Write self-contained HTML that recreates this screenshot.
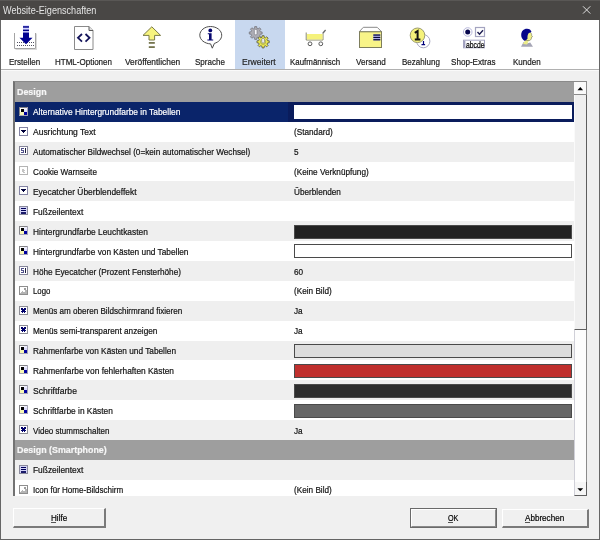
<!DOCTYPE html>
<html><head><meta charset="utf-8"><style>
*{margin:0;padding:0;box-sizing:border-box}
html,body{width:600px;height:540px;overflow:hidden;background:#f0f0f0;font-family:"Liberation Sans",sans-serif;font-size:9px;color:#000}
.a{position:absolute}
.t{position:absolute;white-space:nowrap;transform-origin:0 0;line-height:10px;filter:grayscale(1);-webkit-text-stroke:0.2px currentColor}
.lbl{position:absolute;white-space:nowrap;line-height:10px;color:#1a1a1a}
</style></head><body>

<div class="a" style="left:0;top:0;width:600px;height:20px;background:#494745"></div>
<div class="a" style="left:0;top:0;width:600px;height:1px;background:#595755"></div>
<div class="t" style="left:2.6px;top:6.2px;font-size:10px;color:#e4e4e4;-webkit-text-stroke:0;transform:scaleX(0.91)">Website-Eigenschaften</div>
<svg class="a" style="left:580px;top:4px" width="14" height="12"><path d="M3 2.3l7.3 7.3M10.3 2.3l-7.3 7.3" stroke="#e0e0e0" stroke-width="1"/></svg>
<div class="a" style="left:1px;top:20px;width:598px;height:49px;background:#fff"></div>
<div class="a" style="left:235px;top:20px;width:50px;height:49px;background:#c8d8ef"></div>
<div class="a" style="left:1px;top:69px;width:598px;height:1px;background:#b0b0b0"></div>
<div class="a" style="left:1px;top:70px;width:598px;height:1px;background:#fafafa"></div>
<div class="a" style="left:0;top:20px;width:1px;height:520px;background:#666666"></div>
<div class="a" style="left:599px;top:20px;width:1px;height:520px;background:#666666"></div>
<div class="a" style="left:0;top:539px;width:600px;height:1px;background:#646464"></div>
<div class="t" style="left:8.92px;top:57px;color:#1a1a1a;transform:scaleX(0.89)">Erstellen</div>
<div class="t" style="left:55.12px;top:57px;color:#1a1a1a;transform:scaleX(0.89)">HTML-Optionen</div>
<div class="t" style="left:124.58px;top:57px;color:#1a1a1a;transform:scaleX(0.93)">Veröffentlichen</div>
<div class="t" style="left:195.39px;top:57px;color:#1a1a1a;transform:scaleX(0.89)">Sprache</div>
<div class="t" style="left:242.14px;top:57px;color:#18223c;transform:scaleX(0.95)">Erweitert</div>
<div class="t" style="left:289.92px;top:57px;color:#1a1a1a;transform:scaleX(0.88)">Kaufmännisch</div>
<div class="t" style="left:355.75px;top:57px;color:#1a1a1a;transform:scaleX(0.9)">Versand</div>
<div class="t" style="left:401.84px;top:57px;color:#1a1a1a;transform:scaleX(0.89)">Bezahlung</div>
<div class="t" style="left:451.33px;top:57px;color:#1a1a1a;transform:scaleX(0.9)">Shop-Extras</div>
<div class="t" style="left:513.11px;top:57px;color:#1a1a1a;transform:scaleX(0.89)">Kunden</div>
<svg class="a" style="left:0;top:0" width="600" height="69">
<!-- Erstellen -->
<path d="M14.5 33v15.5h21V33" fill="#fff" stroke="#a4a4a4"/>
<path d="M15.5 49.5h21.5M36.5 33.5v16" stroke="#dadada"/>
<path d="M17 42.5h17M17 45.5h17" stroke="#505060" stroke-dasharray="1 1"/>
<rect x="23" y="25.3" width="6" height="7.3" fill="#d4d4ff"/>
<rect x="23" y="26.2" width="6" height="1.5" fill="#000088"/>
<rect x="23" y="29.6" width="6" height="1.5" fill="#000088"/>
<path d="M23 32.6h6v5.2h3.5L26 44.2 19.5 37.8H23z" fill="#000090"/>
<!-- HTML -->
<path d="M74.5 26.5h14.5l4 4v19h-18.5z" fill="#fff" stroke="#8a8a8a"/>
<path d="M89 26.5v4h4" fill="#e0e0e0" stroke="#5a5a5a"/>
<path d="M82 34l-4 3.8 4 3.8M85.5 34l4 3.8-4 3.8" fill="none" stroke="#14145a" stroke-width="1.8"/>
<!-- Veroeffentlichen -->
<path d="M151.8 26.8l8.8 8.6h-6v4.6h-5.6v-4.6h-6z" fill="#f7f47e" stroke="#7a7a48" stroke-linejoin="round"/>
<rect x="148.8" y="42" width="6" height="1.8" fill="#75754f"/>
<rect x="148.8" y="46.2" width="6" height="1.8" fill="#75754f"/>
<!-- Sprache -->
<path d="M210.4 26.5c6.3 0 11.3 3.9 11.3 8.7 0 3.8-3 6.9-7.3 8.2l-2.1 4.8-1.7-4.3c-6-0.3-10.8-4.1-10.8-8.7 0-4.8 4.9-8.7 10.6-8.7z" fill="#fff" stroke="#4c4c4c"/>
<circle cx="210.3" cy="30.4" r="1.9" fill="#06066e"/>
<path d="M207.8 33.2h3.8v6.4h1.6v1h-5.8v-1h1.6v-5.4h-1.2z" fill="#06066e"/>
<!-- Erweitert gears -->
<path d="M254.68 26.58L256.72 26.58L256.89 28.35L258.14 28.87L259.52 27.74L260.96 29.18L259.83 30.56L260.35 31.81L262.12 31.98L262.12 34.02L260.35 34.19L259.83 35.44L260.96 36.82L259.52 38.26L258.14 37.13L256.89 37.65L256.72 39.42L254.68 39.42L254.51 37.65L253.26 37.13L251.88 38.26L250.44 36.82L251.57 35.44L251.05 34.19L249.28 34.02L249.28 31.98L251.05 31.81L251.57 30.56L250.44 29.18L251.88 27.74L253.26 28.87L254.51 28.35z" fill="#acacb4" stroke="#6e6e76" stroke-width="0.7"/>
<rect x="254.4" y="29.4" width="2.6" height="5.4" rx="1" fill="#f4f4f8" stroke="#76767e" stroke-width="0.6"/>
<path d="M262.13 35.68L264.07 35.68L264.24 37.34L265.44 37.84L266.74 36.78L268.12 38.16L267.06 39.46L267.56 40.66L269.22 40.83L269.22 42.77L267.56 42.94L267.06 44.14L268.12 45.44L266.74 46.82L265.44 45.76L264.24 46.26L264.07 47.92L262.13 47.92L261.96 46.26L260.76 45.76L259.46 46.82L258.08 45.44L259.14 44.14L258.64 42.94L256.98 42.77L256.98 40.83L258.64 40.66L259.14 39.46L258.08 38.16L259.46 36.78L260.76 37.84L261.96 37.34z" fill="#ecea50" stroke="#56563a" stroke-width="0.8"/>
<circle cx="263.1" cy="41.8" r="2.6" fill="none" stroke="#8a8a50" stroke-width="0.6"/>
<rect x="261.8" y="38.4" width="2.6" height="4.6" rx="1" fill="#f4f4f4" stroke="#70707a" stroke-width="0.6"/>
<!-- Kaufmaennisch cart -->
<path d="M306.2 32.5v7.5h16.8v-7.5" fill="none" stroke="#8a8a70" stroke-width="1"/>
<rect x="307" y="34" width="15.5" height="5.5" fill="#f5f27c"/>
<path d="M323 33l2.6-3" stroke="#6a6a6a" stroke-width="1.3"/>
<circle cx="310" cy="43.8" r="1.9" fill="#fff" stroke="#5a5a5a" stroke-width="1"/>
<circle cx="320.8" cy="43.8" r="1.9" fill="#fff" stroke="#5a5a5a" stroke-width="1"/>
<!-- Versand -->
<path d="M363.3 27.3h13.9l4.5 4.5h-22.5z" fill="#fff" stroke="#8a8a8a"/>
<rect x="359.5" y="31.8" width="22" height="15.7" fill="#f8f488" stroke="#7e7e5c"/>
<rect x="373.3" y="34.4" width="7" height="6" fill="#c0c0ff"/>
<rect x="373.3" y="34.4" width="7" height="1.3" fill="#08083a"/>
<rect x="373.3" y="36.8" width="7" height="1.3" fill="#08083a"/>
<rect x="373.3" y="39.1" width="7" height="1.3" fill="#08083a"/>
<!-- Bezahlung -->
<circle cx="423.3" cy="41.2" r="6.6" fill="#fff" stroke="#a8a8c0"/>
<path d="M421.5 44.6h3.6M423.5 44.6v-3.5" stroke="#00007a" stroke-width="1.2"/>
<circle cx="417.5" cy="35.3" r="7.3" fill="#f5f27a" stroke="#9a9a70"/>
<path d="M414.8 39.4h5.6M417.6 39.4v-8.4l-2.8 1.8" fill="none" stroke="#141414" stroke-width="2"/>
<!-- Shop-Extras -->
<circle cx="467.7" cy="32" r="4.3" fill="#fff" stroke="#b8b8dc"/>
<circle cx="467.7" cy="32" r="2.5" fill="#08084e"/>
<rect x="475.5" y="27.5" width="9" height="9" fill="#fff" stroke="#a4a4c0" stroke-width="1.2"/>
<path d="M477.5 32l2 2.2 3.5-4" fill="none" stroke="#1c1c50" stroke-width="1.4"/>
<rect x="463.5" y="40.2" width="21" height="7.6" fill="#fff" stroke="#a4a4c0" stroke-width="1"/>
<rect x="464.2" y="40.8" width="1.1" height="6.4" fill="#8a8ab0"/>
<!-- Kunden -->
<path d="M521 46.8L523.6 42L527 43.6L530.2 42.4L533 46.8z" fill="#a6a6b6"/>
<path d="M523 44L525.6 39.6L529 40.4L527 44.4z" fill="#ecec88"/>
<path d="M527 32.2L530.4 32.4C531.4 33.2 531.8 34.4 531.6 35.4L532.5 36.7L531.5 37.3C531.6 38.7 531 39.8 529.8 40.5L526.4 40.5C525.6 38 525.9 35 527 32.2z" fill="#f0f08c" stroke="#6e6e52" stroke-width="0.6"/>
<path d="M521.2 35.2C521.2 31.2 523.6 28.8 527 28.8C529.4 28.8 531 30 531.5 32.1L528.8 32.9C527.6 34.6 527.2 36.6 527.6 38.6L525 40.9C522.6 39.9 521.2 37.6 521.2 35.2z" fill="#06068a"/>
</svg>
<div class="t" style="left:465.6px;top:40px;font-size:8.5px;color:#000;transform:scaleX(0.8)">abcde</div>
<div class="a" style="left:13px;top:81px;width:574px;height:415px;background:#fff;overflow:hidden;border-left:2px solid #727272;border-top:1px solid #8a8a8a">
<div class="a" style="left:0;top:0.00px;width:571px;height:19.89px;background:#9e9e9e"></div>
<div class="t" style="left:2.3999999999999986px;top:4.60px;font-weight:bold;font-size:9.6px;color:#f6f6f6;transform:scaleX(0.925)">Design</div>
<div class="a" style="left:0;top:19.89px;width:559px;height:19.89px;background:#0a246a"></div>
<svg class="a" style="left:4px;top:25.00px" width="9" height="9" shape-rendering="crispEdges"><rect width="9" height="9" fill="#fff"/><rect x="5" y="1" width="3" height="7" fill="#dcdcff"/><rect x="5" y="1" width="3" height="2" fill="#eeeeff"/><rect width="9" height="1" fill="#848488"/><rect width="1" height="9" fill="#848488"/><rect x="8" width="1" height="9" fill="#a4a4b4"/><rect y="8" width="9" height="1" fill="#a4a4b4"/><rect x="2" y="2" width="3" height="2.5" fill="#000"/><rect x="1" y="4.6" width="3.6" height="3.4" fill="#f6f6b4"/><rect x="5" y="5" width="2.6" height="2.6" fill="#0000a0"/></svg>
<div class="t" style="left:17.6px;top:25.39px;color:#ffffff;transform:scaleX(0.933)">Alternative Hintergrundfarbe in Tabellen</div>
<div class="a" style="left:273px;top:19.89px;width:286px;height:19.89px;background:#0a1c5c"></div>
<div class="a" style="left:279px;top:22.89px;width:278px;height:14px;background:#fff"></div>
<div class="a" style="left:0;top:39.78px;width:559px;height:19.89px;background:#ffffff"></div>
<svg class="a" style="left:4px;top:45.00px" width="9" height="9" shape-rendering="crispEdges"><rect width="9" height="9" fill="#fff"/><rect width="9" height="9" fill="none" stroke="#8484a4" stroke-width="2"/><path d="M2 3.3h5l-2.5 3z" fill="#00003a"/></svg>
<div class="t" style="left:17.6px;top:45.28px;color:#111;transform:scaleX(0.943)">Ausrichtung Text</div>
<div class="t" style="left:278.6px;top:45.28px;color:#111;transform:scaleX(0.91)">(Standard)</div>
<div class="a" style="left:0;top:59.67px;width:559px;height:19.89px;background:#efefef"></div>
<svg class="a" style="left:4px;top:64.00px" width="9" height="9" shape-rendering="crispEdges"><rect width="9" height="9" fill="#fff"/><rect width="9" height="9" fill="none" stroke="#86869a" stroke-width="2"/><path d="M2 2h3.2v1.3h-2v0.9h2v2.8h-3.2v-1.1h2v-0.8h-2z" fill="#50508a"/><rect x="6" y="2" width="1.2" height="5" fill="#1c1c3c"/></svg>
<div class="t" style="left:17.6px;top:65.17px;color:#111;transform:scaleX(0.910)">Automatischer Bildwechsel (0=kein automatischer Wechsel)</div>
<div class="t" style="left:278.6px;top:65.17px;color:#111;transform:scaleX(0.91)">5</div>
<div class="a" style="left:0;top:79.56px;width:559px;height:19.89px;background:#ffffff"></div>
<svg class="a" style="left:4px;top:84.00px" width="9" height="9" shape-rendering="crispEdges"><rect width="9" height="9" fill="#fff"/><rect width="9" height="9" fill="none" stroke="#b4b4b4" stroke-width="2"/><path d="M2.8 2v4.8l1.2-1 1 1.8 0.9-0.5-1-1.8h1.8z" fill="#c4c4c4"/></svg>
<div class="t" style="left:17.6px;top:85.06px;color:#111;transform:scaleX(0.904)">Cookie Warnseite</div>
<div class="t" style="left:278.6px;top:85.06px;color:#111;transform:scaleX(0.91)">(Keine Verknüpfung)</div>
<div class="a" style="left:0;top:99.45px;width:559px;height:19.89px;background:#efefef"></div>
<svg class="a" style="left:4px;top:104.00px" width="9" height="9" shape-rendering="crispEdges"><rect width="9" height="9" fill="#fff"/><rect width="9" height="9" fill="none" stroke="#8484a4" stroke-width="2"/><path d="M2 3.3h5l-2.5 3z" fill="#00003a"/></svg>
<div class="t" style="left:17.6px;top:104.95px;color:#111;transform:scaleX(0.933)">Eyecatcher Überblendeffekt</div>
<div class="t" style="left:278.6px;top:104.95px;color:#111;transform:scaleX(0.91)">Überblenden</div>
<div class="a" style="left:0;top:119.34px;width:559px;height:19.89px;background:#ffffff"></div>
<svg class="a" style="left:4px;top:124.00px" width="9" height="9" shape-rendering="crispEdges"><rect width="9" height="9" fill="#d4d4f6"/><rect width="9" height="9" fill="none" stroke="#8a8a9c" stroke-width="2"/><rect x="2" y="2" width="5" height="1.2" fill="#000058"/><rect x="2" y="4.2" width="5" height="1.2" fill="#000058"/><rect x="2" y="6.3" width="5" height="1.2" fill="#1a1a6a"/></svg>
<div class="t" style="left:17.6px;top:124.84px;color:#111;transform:scaleX(0.930)">Fußzeilentext</div>
<div class="a" style="left:0;top:139.23px;width:559px;height:19.89px;background:#efefef"></div>
<svg class="a" style="left:4px;top:144.00px" width="9" height="9" shape-rendering="crispEdges"><rect width="9" height="9" fill="#fff"/><rect x="5" y="1" width="3" height="7" fill="#dcdcff"/><rect x="5" y="1" width="3" height="2" fill="#eeeeff"/><rect width="9" height="1" fill="#848488"/><rect width="1" height="9" fill="#848488"/><rect x="8" width="1" height="9" fill="#a4a4b4"/><rect y="8" width="9" height="1" fill="#a4a4b4"/><rect x="2" y="2" width="3" height="2.5" fill="#000"/><rect x="1" y="4.6" width="3.6" height="3.4" fill="#f6f6b4"/><rect x="5" y="5" width="2.6" height="2.6" fill="#0000a0"/></svg>
<div class="t" style="left:17.6px;top:144.73px;color:#111;transform:scaleX(0.929)">Hintergrundfarbe Leuchtkasten</div>
<div class="a" style="left:279px;top:142.53px;width:278px;height:14px;background:#222222;border:1px solid #4a4a4a"></div>
<div class="a" style="left:0;top:159.12px;width:559px;height:19.89px;background:#ffffff"></div>
<svg class="a" style="left:4px;top:164.00px" width="9" height="9" shape-rendering="crispEdges"><rect width="9" height="9" fill="#fff"/><rect x="5" y="1" width="3" height="7" fill="#dcdcff"/><rect x="5" y="1" width="3" height="2" fill="#eeeeff"/><rect width="9" height="1" fill="#848488"/><rect width="1" height="9" fill="#848488"/><rect x="8" width="1" height="9" fill="#a4a4b4"/><rect y="8" width="9" height="1" fill="#a4a4b4"/><rect x="2" y="2" width="3" height="2.5" fill="#000"/><rect x="1" y="4.6" width="3.6" height="3.4" fill="#f6f6b4"/><rect x="5" y="5" width="2.6" height="2.6" fill="#0000a0"/></svg>
<div class="t" style="left:17.6px;top:164.62px;color:#111;transform:scaleX(0.923)">Hintergrundfarbe von Kästen und Tabellen</div>
<div class="a" style="left:279px;top:162.42px;width:278px;height:14px;background:#ffffff;border:1px solid #4a4a4a"></div>
<div class="a" style="left:0;top:179.01px;width:559px;height:19.89px;background:#efefef"></div>
<svg class="a" style="left:4px;top:184.00px" width="9" height="9" shape-rendering="crispEdges"><rect width="9" height="9" fill="#fff"/><rect width="9" height="9" fill="none" stroke="#86869a" stroke-width="2"/><path d="M2 2h3.2v1.3h-2v0.9h2v2.8h-3.2v-1.1h2v-0.8h-2z" fill="#50508a"/><rect x="6" y="2" width="1.2" height="5" fill="#1c1c3c"/></svg>
<div class="t" style="left:17.6px;top:184.51px;color:#111;transform:scaleX(0.916)">Höhe Eyecatcher (Prozent Fensterhöhe)</div>
<div class="t" style="left:278.6px;top:184.51px;color:#111;transform:scaleX(0.91)">60</div>
<div class="a" style="left:0;top:198.90px;width:559px;height:19.89px;background:#ffffff"></div>
<svg class="a" style="left:4px;top:204.00px" width="9" height="9" shape-rendering="crispEdges"><rect width="9" height="9" fill="#fff"/><rect width="9" height="9" fill="none" stroke="#8e8e8e" stroke-width="2"/><path d="M1 8l2.6-3.2 1.4 1.4 2.2-2.6 0.8 1v3.4z" fill="#b4b4b4"/><circle cx="6" cy="2.8" r="1.1" fill="#9c9c9c"/></svg>
<div class="t" style="left:17.6px;top:204.40px;color:#111;transform:scaleX(0.865)">Logo</div>
<div class="t" style="left:278.6px;top:204.40px;color:#111;transform:scaleX(0.91)">(Kein Bild)</div>
<div class="a" style="left:0;top:218.79px;width:559px;height:19.89px;background:#efefef"></div>
<svg class="a" style="left:4px;top:224.00px" width="9" height="9" shape-rendering="crispEdges"><rect width="9" height="9" fill="#fff"/><rect width="9" height="9" fill="none" stroke="#8c8c94" stroke-width="2"/><path d="M2.5 2.5l4 4M6.5 2.5l-4 4" stroke="#00006a" stroke-width="1.5"/></svg>
<div class="t" style="left:17.6px;top:224.29px;color:#111;transform:scaleX(0.899)">Menüs am oberen Bildschirmrand fixieren</div>
<div class="t" style="left:278.6px;top:224.29px;color:#111;transform:scaleX(0.91)">Ja</div>
<div class="a" style="left:0;top:238.68px;width:559px;height:19.89px;background:#ffffff"></div>
<svg class="a" style="left:4px;top:243.00px" width="9" height="9" shape-rendering="crispEdges"><rect width="9" height="9" fill="#fff"/><rect width="9" height="9" fill="none" stroke="#8c8c94" stroke-width="2"/><path d="M2.5 2.5l4 4M6.5 2.5l-4 4" stroke="#00006a" stroke-width="1.5"/></svg>
<div class="t" style="left:17.6px;top:244.18px;color:#111;transform:scaleX(0.914)">Menüs semi-transparent anzeigen</div>
<div class="t" style="left:278.6px;top:244.18px;color:#111;transform:scaleX(0.91)">Ja</div>
<div class="a" style="left:0;top:258.57px;width:559px;height:19.89px;background:#efefef"></div>
<svg class="a" style="left:4px;top:263.00px" width="9" height="9" shape-rendering="crispEdges"><rect width="9" height="9" fill="#fff"/><rect x="5" y="1" width="3" height="7" fill="#dcdcff"/><rect x="5" y="1" width="3" height="2" fill="#eeeeff"/><rect width="9" height="1" fill="#848488"/><rect width="1" height="9" fill="#848488"/><rect x="8" width="1" height="9" fill="#a4a4b4"/><rect y="8" width="9" height="1" fill="#a4a4b4"/><rect x="2" y="2" width="3" height="2.5" fill="#000"/><rect x="1" y="4.6" width="3.6" height="3.4" fill="#f6f6b4"/><rect x="5" y="5" width="2.6" height="2.6" fill="#0000a0"/></svg>
<div class="t" style="left:17.6px;top:264.07px;color:#111;transform:scaleX(0.920)">Rahmenfarbe von Kästen und Tabellen</div>
<div class="a" style="left:279px;top:261.87px;width:278px;height:14px;background:#dcdcdc;border:1px solid #4a4a4a"></div>
<div class="a" style="left:0;top:278.46px;width:559px;height:19.89px;background:#ffffff"></div>
<svg class="a" style="left:4px;top:283.00px" width="9" height="9" shape-rendering="crispEdges"><rect width="9" height="9" fill="#fff"/><rect x="5" y="1" width="3" height="7" fill="#dcdcff"/><rect x="5" y="1" width="3" height="2" fill="#eeeeff"/><rect width="9" height="1" fill="#848488"/><rect width="1" height="9" fill="#848488"/><rect x="8" width="1" height="9" fill="#a4a4b4"/><rect y="8" width="9" height="1" fill="#a4a4b4"/><rect x="2" y="2" width="3" height="2.5" fill="#000"/><rect x="1" y="4.6" width="3.6" height="3.4" fill="#f6f6b4"/><rect x="5" y="5" width="2.6" height="2.6" fill="#0000a0"/></svg>
<div class="t" style="left:17.6px;top:283.96px;color:#111;transform:scaleX(0.927)">Rahmenfarbe von fehlerhaften Kästen</div>
<div class="a" style="left:279px;top:281.76px;width:278px;height:14px;background:#c0302e;border:1px solid #4a4a4a"></div>
<div class="a" style="left:0;top:298.35px;width:559px;height:19.89px;background:#efefef"></div>
<svg class="a" style="left:4px;top:303.00px" width="9" height="9" shape-rendering="crispEdges"><rect width="9" height="9" fill="#fff"/><rect x="5" y="1" width="3" height="7" fill="#dcdcff"/><rect x="5" y="1" width="3" height="2" fill="#eeeeff"/><rect width="9" height="1" fill="#848488"/><rect width="1" height="9" fill="#848488"/><rect x="8" width="1" height="9" fill="#a4a4b4"/><rect y="8" width="9" height="1" fill="#a4a4b4"/><rect x="2" y="2" width="3" height="2.5" fill="#000"/><rect x="1" y="4.6" width="3.6" height="3.4" fill="#f6f6b4"/><rect x="5" y="5" width="2.6" height="2.6" fill="#0000a0"/></svg>
<div class="t" style="left:17.6px;top:303.85px;color:#111;transform:scaleX(0.954)">Schriftfarbe</div>
<div class="a" style="left:279px;top:301.65px;width:278px;height:14px;background:#2e2e2e;border:1px solid #4a4a4a"></div>
<div class="a" style="left:0;top:318.24px;width:559px;height:19.89px;background:#ffffff"></div>
<svg class="a" style="left:4px;top:323.00px" width="9" height="9" shape-rendering="crispEdges"><rect width="9" height="9" fill="#fff"/><rect x="5" y="1" width="3" height="7" fill="#dcdcff"/><rect x="5" y="1" width="3" height="2" fill="#eeeeff"/><rect width="9" height="1" fill="#848488"/><rect width="1" height="9" fill="#848488"/><rect x="8" width="1" height="9" fill="#a4a4b4"/><rect y="8" width="9" height="1" fill="#a4a4b4"/><rect x="2" y="2" width="3" height="2.5" fill="#000"/><rect x="1" y="4.6" width="3.6" height="3.4" fill="#f6f6b4"/><rect x="5" y="5" width="2.6" height="2.6" fill="#0000a0"/></svg>
<div class="t" style="left:17.6px;top:323.74px;color:#111;transform:scaleX(0.928)">Schriftfarbe in Kästen</div>
<div class="a" style="left:279px;top:321.54px;width:278px;height:14px;background:#666666;border:1px solid #4a4a4a"></div>
<div class="a" style="left:0;top:338.13px;width:559px;height:19.89px;background:#efefef"></div>
<svg class="a" style="left:4px;top:343.00px" width="9" height="9" shape-rendering="crispEdges"><rect width="9" height="9" fill="#fff"/><rect width="9" height="9" fill="none" stroke="#8c8c94" stroke-width="2"/><path d="M2.5 2.5l4 4M6.5 2.5l-4 4" stroke="#00006a" stroke-width="1.5"/></svg>
<div class="t" style="left:17.6px;top:343.63px;color:#111;transform:scaleX(0.889)">Video stummschalten</div>
<div class="t" style="left:278.6px;top:343.63px;color:#111;transform:scaleX(0.91)">Ja</div>
<div class="a" style="left:0;top:358.02px;width:571px;height:19.89px;background:#9e9e9e"></div>
<div class="t" style="left:2.3999999999999986px;top:362.62px;font-weight:bold;font-size:9.6px;color:#f6f6f6;transform:scaleX(0.925)">Design (Smartphone)</div>
<div class="a" style="left:0;top:377.91px;width:559px;height:19.89px;background:#efefef"></div>
<svg class="a" style="left:4px;top:383.00px" width="9" height="9" shape-rendering="crispEdges"><rect width="9" height="9" fill="#d4d4f6"/><rect width="9" height="9" fill="none" stroke="#8a8a9c" stroke-width="2"/><rect x="2" y="2" width="5" height="1.2" fill="#000058"/><rect x="2" y="4.2" width="5" height="1.2" fill="#000058"/><rect x="2" y="6.3" width="5" height="1.2" fill="#1a1a6a"/></svg>
<div class="t" style="left:17.6px;top:383.41px;color:#111;transform:scaleX(0.930)">Fußzeilentext</div>
<div class="a" style="left:0;top:397.80px;width:559px;height:19.89px;background:#ffffff"></div>
<svg class="a" style="left:4px;top:403.00px" width="9" height="9" shape-rendering="crispEdges"><rect width="9" height="9" fill="#fff"/><rect width="9" height="9" fill="none" stroke="#8e8e8e" stroke-width="2"/><path d="M1 8l2.6-3.2 1.4 1.4 2.2-2.6 0.8 1v3.4z" fill="#b4b4b4"/><circle cx="6" cy="2.8" r="1.1" fill="#9c9c9c"/></svg>
<div class="t" style="left:17.6px;top:403.30px;color:#111;transform:scaleX(0.893)">Icon für Home-Bildschirm</div>
<div class="t" style="left:278.6px;top:403.30px;color:#111;transform:scaleX(0.91)">(Kein Bild)</div>
<div class="a" style="left:559px;top:0;width:13px;height:414px;background:#fdfdfd;border-left:1px solid #d0d0d8;border-right:1px solid #8c8c8c"></div>
<div class="a" style="left:559px;top:13px;width:13px;height:235px;background:#efefef;border-left:1px solid #fafafa;border-right:1px solid #5e5e5e;border-bottom:1px solid #5e5e5e"></div>
<div class="a" style="left:559px;top:0;width:13px;height:13px;background:#fafafa;border-right:1px solid #8c8c8c;border-bottom:1px solid #8a8a8a"></div>
<svg class="a" style="left:559px;top:0" width="12" height="13"><path d="M3.5 8.2h5.6L6.3 5.1z" fill="#000"/></svg>
<div class="a" style="left:559px;top:400px;width:13px;height:14px;background:#f6f6f6;border-left:1px solid #d0d0d8;border-right:1px solid #5e5e5e;border-bottom:1px solid #5e5e5e"></div>
<svg class="a" style="left:559px;top:400px" width="12" height="14"><path d="M3.4 6.2h5.8L6.3 9.2z" fill="#000"/></svg>
</div>
<div class="a" style="left:13px;top:508px;width:93px;height:20px;background:#f0f0f0;border-top:1px solid #fff;border-left:1px solid #fff;border-right:2px solid #7a7a7a;border-bottom:2px solid #7a7a7a"></div>
<div class="t" style="left:50.5px;top:513px;color:#000;transform:scaleX(0.9)">Hilfe</div>
<div class="a" style="left:410px;top:508px;width:87px;height:20px;background:#f0f0f0;border:1px solid #6a6a6a"></div>
<div class="a" style="left:411px;top:509px;width:85px;height:18px;border-top:1px solid #fff;border-left:1px solid #fff;border-right:1px solid #8a8a8a;border-bottom:1px solid #8a8a8a"></div>
<div class="t" style="left:448px;top:513px;color:#000;transform:scaleX(0.8)">OK</div>
<div class="a" style="left:502px;top:509px;width:87px;height:19px;background:#f0f0f0;border-top:1px solid #fff;border-left:1px solid #fff;border-right:2px solid #7a7a7a;border-bottom:2px solid #7a7a7a"></div>
<div class="t" style="left:525px;top:513px;color:#000;transform:scaleX(0.9)">Abbrechen</div>
<div class="a" style="left:51px;top:522px;width:5px;height:1px;background:#555"></div>
<div class="a" style="left:448px;top:522px;width:5px;height:1px;background:#555"></div>
<div class="a" style="left:525px;top:522px;width:5px;height:1px;background:#555"></div>
</body></html>
